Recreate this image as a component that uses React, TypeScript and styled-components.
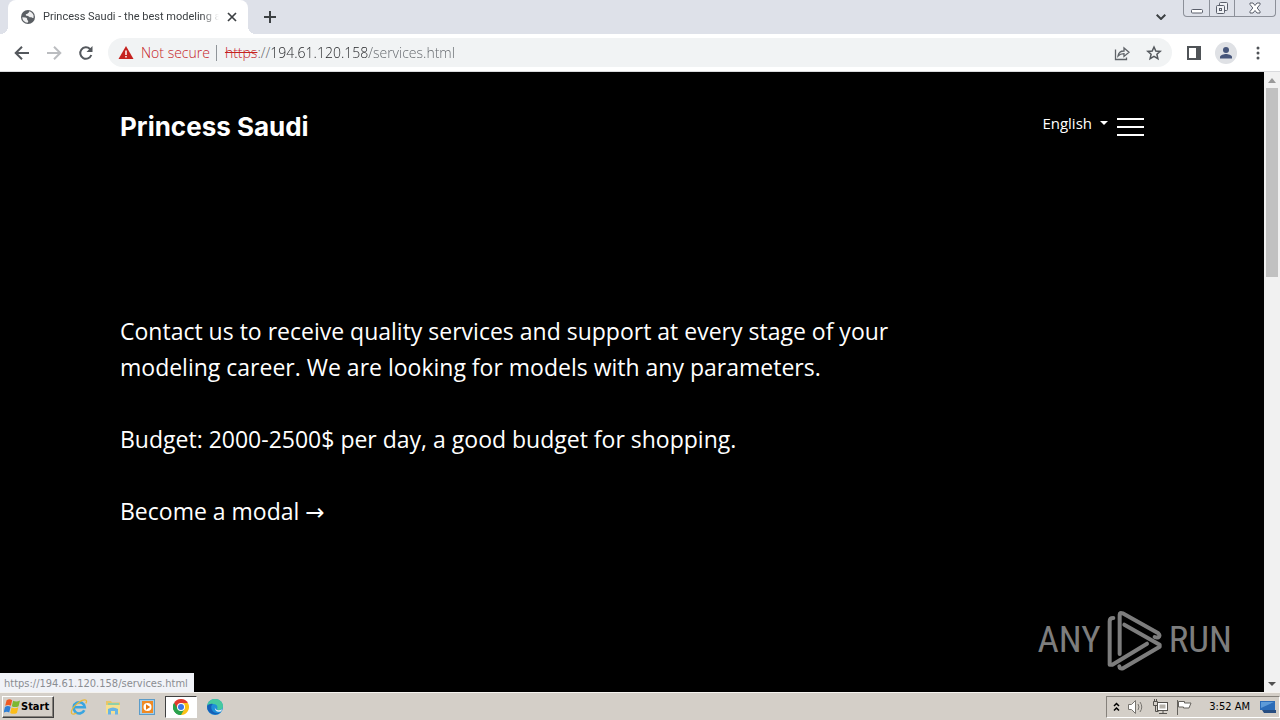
import React from "react";
import styled, { createGlobalStyle } from "styled-components";

const GlobalStyle = createGlobalStyle`
  *, *::before, *::after { box-sizing: border-box; }
  body { margin: 0; background: #d4cfc8; }
  button, input, select { font: inherit; color: inherit; }
  svg { display: block; flex: none; }
`;

const ui = `"Open Sans", "Noto Sans", sans-serif`;
const tahoma = `"DejaVu Sans Condensed", "DejaVu Sans", sans-serif`;

const Desktop = styled.div`
  display: flex;
  flex-direction: column;
  min-height: 100vh;
  font-family: ${ui};
`;

/* Browser window */

const TabStrip = styled.header`
  display: flex;
  height: 34px;
  padding-left: 8px;
  background: #dee1e9;
`;

const Tab = styled.div`
  position: relative;
  display: flex;
  align-items: center;
  width: 240px;
  padding: 0 10px 0 12px;
  gap: 7px;
  border-radius: 8px 8px 0 0;
  background: #fff;
  color: #3c4043;

  &::before, &::after {
    content: "";
    position: absolute;
    bottom: 0;
    width: 8px;
    height: 8px;
  }
  &::before {
    right: 100%;
    background: radial-gradient(circle at 0 0, transparent 8px, #fff 8px);
  }
  &::after {
    left: 100%;
    background: radial-gradient(circle at 100% 0, transparent 8px, #fff 8px);
  }
`;

const TabTitle = styled.span`
  flex: 1;
  min-width: 0;
  white-space: nowrap;
  font-family: Roboto, sans-serif;
  font-size: 11px;
  line-height: 16px;
  mask-image: linear-gradient(to right, #000 90%, transparent);
`;

const IconButton = styled.button<{ $w?: number; $h?: number }>`
  display: flex;
  align-items: center;
  justify-content: center;
  flex: none;
  width: ${(p) => p.$w ?? 28}px;
  height: ${(p) => p.$h ?? 28}px;
  padding: 0;
  border: 0;
  background: none;
`;

const NewTab = styled(IconButton)`
  align-self: center;
  margin-left: 8px;
`;

const StripEnd = styled.div`
  display: flex;
  align-items: center;
  margin-left: auto;
  padding-right: 4px;
  gap: 8px;
`;

const WindowControls = styled.div`
  display: flex;
  align-self: flex-start;
  border: 1px solid #8c9099;
  border-top: 0;
  border-radius: 0 0 4px 4px;

  button + button { border-left: 1px solid #8c9099; }
`;

const Toolbar = styled.div`
  display: flex;
  align-items: center;
  height: 38px;
  padding: 0 8px;
  border-bottom: 1px solid #d9dadd;
  background: #fff;
`;

const NavButtons = styled.div`
  display: flex;
  gap: 4px;
  margin-right: 8px;
`;

const Omnibox = styled.div`
  display: flex;
  align-items: center;
  flex: 1;
  height: 29px;
  padding: 0 2px 0 10px;
  border-radius: 15px;
  background: #f1f3f4;
  color: #5f6368;
  font-size: 14px;
  font-weight: 300;
  line-height: 20px;
`;

const Security = styled.button`
  display: flex;
  align-items: center;
  gap: 7px;
  padding: 0 6px 0 0;
  border: 0;
  border-right: 1px solid #8f9499;
  margin-right: 8px;
  background: none;
  color: #c5221f;
  line-height: 16px;
`;

const Scheme = styled.span`
  color: #c5221f;
  text-decoration: line-through;
`;

const Address = styled.input`
  flex: 1;
  min-width: 0;
  padding: 0;
  border: 0;
  outline: 0;
  background: linear-gradient(to right, #202124 99px, #5f6368 99px);
  background-clip: text;
  -webkit-background-clip: text;
  color: transparent;
`;

const ToolbarEnd = styled.div`
  display: flex;
  gap: 2px;
  margin-left: 8px;
`;

/* Page area */

const Viewport = styled.div`
  position: relative;
  display: flex;
  flex: 1;
  background: #000;
`;

const Page = styled.div`
  flex: 1;
  padding: 0 120px 60px;
  color: #fff;
`;

const SiteNav = styled.nav`
  display: flex;
  align-items: center;
  justify-content: space-between;
  height: 110px;
`;

const Brand = styled.a`
  color: #fff;
  font-family: Inter, sans-serif;
  font-size: 26px;
  font-weight: 700;
  line-height: 32px;
  text-decoration: none;
`;

const NavEnd = styled.div`
  display: flex;
  align-items: center;
  gap: 9px;
`;

const Language = styled.button`
  display: flex;
  align-items: center;
  gap: 8px;
  padding: 0 0 8px;
  border: 0;
  background: none;
  font-size: 15px;
  line-height: 24px;

  &::after {
    content: "";
    border: 4px solid transparent;
    border-top-color: #fff;
    border-bottom: 0;
  }
`;

const Burger = styled.button`
  display: flex;
  flex-direction: column;
  gap: 6px;
  width: 27px;
  padding: 0;
  border: 0;
  background: none;

  span { height: 2px; width: 100%; background: #fff; }
`;

const Intro = styled.main`
  max-width: 800px;
  padding-top: 131px;
  font-size: 23px;
  line-height: 36px;

  p { margin: 0 0 36px; }
  a { color: inherit; text-decoration: none; }
`;

const Arrow = styled.span`
  font-family: "DejaVu Sans", sans-serif;
  line-height: 1;
`;

const Scrollbar = styled.div`
  display: flex;
  flex-direction: column;
  align-items: center;
  width: 16px;
  background: #f1f1f1;
`;

const ScrollArrow = styled(IconButton)`
  width: 16px;
  height: 16px;
`;

const ScrollThumb = styled.div`
  width: 12px;
  height: 30.5%;
  margin-bottom: auto;
  background: #c1c1c1;
`;

const StatusBubble = styled.div`
  position: absolute;
  left: 0;
  bottom: 0;
  padding: 3px 6px 0 4px;
  background: #f1f3f8;
  color: #8a8d92;
  font-family: ${tahoma};
  font-size: 11px;
  line-height: 16px;
`;

const Watermark = styled.div`
  position: absolute;
  right: 48px;
  bottom: 16px;
  display: flex;
  align-items: center;
  gap: 4px;
  color: #7d7d7d;
  font-family: "Roboto Condensed", Roboto, sans-serif;
  font-size: 37px;
  line-height: 72px;
`;

/* Taskbar */

const Taskbar = styled.footer`
  display: flex;
  align-items: center;
  height: 28px;
  padding: 0 0 0 2px;
  border-top: 1px solid #f4f2ee;
  background: #d4cfc8;
`;

const Start = styled.button`
  display: flex;
  align-items: center;
  gap: 1px;
  height: 22px;
  padding: 0 4px 0 1px;
  border: 1px solid;
  border-color: #fff #404040 #404040 #fff;
  margin-right: 8px;
  background: #d4cfc8;
  box-shadow: inset -1px -1px #85817b;
  color: #000;
  font-family: ${tahoma};
  font-size: 11px;
  font-weight: 700;
`;

const TaskButton = styled.button<{ $active?: boolean }>`
  display: flex;
  align-items: center;
  justify-content: center;
  width: ${(p) => (p.$active ? 32 : 34)}px;
  height: 22px;
  padding: 0;
  border: 1px solid;
  border-color: ${(p) => (p.$active ? "#404040 #fff #fff #404040" : "transparent")};
  margin: 0 ${(p) => (p.$active ? 1 : 0)}px;
  background: ${(p) => (p.$active ? "#fff" : "none")};
`;

const Tray = styled.div`
  display: flex;
  align-items: center;
  height: 22px;
  padding: 0 3px;
  border: 1px solid;
  border-color: #85817b #fff #fff #85817b;
  margin-left: auto;
  gap: 4px;
  color: #000;
  font-family: ${tahoma};
  font-size: 11px;
`;

const Clock = styled.time`
  margin: 0 6px 0 11px;
  white-space: nowrap;
`;

const GlobeIcon = () => (
  <svg width="16" height="16" viewBox="0 0 16 16">
    <circle cx="8" cy="8" r="7" fill="#5a5e63" />
    <path d="M2.300 8.300 5.300 8.500C6.800 8.700 7.400 9.700 7.200 10.600 7 11.400 8 11.200 8.200 12.200 8.300 12.900 7.800 13.300 7.500 13.700 4.500 13.500 2.300 11.200 2.300 8.300z" fill="#fff" opacity=".9" />
    <path d="M9 2.300C11.200 2.700 13 4.300 13.600 6.500L13.500 9C12.500 9.200 12.300 8.200 11.300 8.200 10.300 8.300 9 8.400 8.700 7.500 8.500 6.500 7.200 7 6.300 6.700 5.500 6.300 5.600 5.200 6.500 5 7.700 4.900 7.300 4.200 8.300 3.900 9 3.700 9.300 3 9 2.300z" fill="#fff" opacity=".9" />
  </svg>
);

const WindowsIcon = () => (
  <svg width="16" height="16" viewBox="1 1.500 13.500 13.500">
    <path d="M3.200 2.500c1.700-1 3.200-.9 4.700 0L6.800 7.200c-1.500-.8-3-.9-4.800.1z" fill="#ee5a24" />
    <path d="M8.700 3c1.800.9 3.700.9 5.800-.2l-1.200 4.800c-1.900 1-3.900 1-5.700 0z" fill="#7cb832" />
    <path d="M1.800 8.200c1.700-1 3.200-.9 4.800-.1l-1.200 4.700c-1.500-.8-3-.8-4.700.2z" fill="#2f7fd6" />
    <path d="M7.400 8.600c1.800.9 3.700.9 5.700-.1l-1.200 4.800c-1.800 1-3.900 1-5.700 0z" fill="#fbbd1a" />
  </svg>
);

const IEIcon = () => (
  <svg width="18" height="18" viewBox="0 0 18 18" fill="none">
    <path d="M14.300 12.200A5.600 5.600 0 1 1 14.800 9.300H4.500" stroke="#39a5e0" strokeWidth="2.600" />
    <path d="M1.800 15.600C-.4 12 8.400 2.600 14.500 1.800c2.600-.2 2.300 2 1.300 3.600M1.800 15.600c1 1 3 .4 4.600-.6" stroke="#e9b93a" strokeWidth="1.300" />
  </svg>
);

const ExplorerIcon = () => (
  <svg width="18" height="18" viewBox="0 0 18 18">
    <path d="M2 3h5l1 1.500h8V13H2z" fill="#e8c667" />
    <path d="M4 5h11v3H4z" fill="#8fd0a8" />
    <path d="M2 7h14v8.500H2z" fill="#f6e08f" />
    <path d="M4 16.500V11q5-3 10 0v5.500h-3V13H7v3.500z" fill="#68b4e4" />
  </svg>
);

const MediaIcon = () => (
  <svg width="18" height="18" viewBox="0 0 18 18">
    <rect x="1.500" y="1.500" width="15" height="15" fill="#a5cde8" stroke="#5b9cc9" />
    <rect x="4" y="3" width="11" height="12" fill="#f08a24" />
    <circle cx="9.500" cy="9" r="4" fill="#fff" />
    <path d="m8 6.200 4.200 2.800L8 11.800z" fill="#e8760e" />
  </svg>
);

const ChromeIcon = () => (
  <svg width="16" height="16" viewBox="0 0 16 16">
    <path d="M8 8 1.070 4A8 8 0 0 1 14.930 4z" fill="#e33b2e" />
    <path d="M8 8 14.930 4A8 8 0 0 1 8 16z" fill="#fbc116" />
    <path d="M8 8v8A8 8 0 0 1 1.070 4z" fill="#2ba24c" />
    <path d="M8 4h6.930L11.400 10z" fill="#fbc116" />
    <path d="M1.070 4 4.540 10 8 8V4z" fill="#e33b2e" />
    <path d="M1.070 4 4.540 10 11.460 10 8 16A8 8 0 0 1 1.070 4z" fill="#2ba24c" />
    <circle cx="8" cy="8" r="4" fill="#fff" />
    <circle cx="8" cy="8" r="3" fill="#3b78e7" />
  </svg>
);

const EdgeIcon = () => (
  <svg width="18" height="18" viewBox="0 0 18 18">
    <circle cx="9" cy="9" r="8" fill="#1d8fd8" />
    <path d="M1.100 8C1.800 3.500 5.300 1 9 1c5 0 8 3.600 8 7 0 2.600-2 4-4 4-1.600 0-2.500-.7-1.700-1.700C12 8.500 10.800 6.200 7.800 6 5 5.800 2.400 6.700 1.100 8z" fill="#46c9a0" />
    <path d="M1.100 8C2 6.400 4.600 5.300 7 5.900 5 7 4.800 9.600 6 12c1.200 2.300 3.700 3.600 6.500 2.900l2.400-1A8 8 0 0 1 1.100 8z" fill="#1660b8" />
    <path d="M9.200 8.500c-.8 1.600.3 3.500 3 3.700 1.200.1 2.600-.2 4-1-.3 1-.8 1.800-1.400 2.400-3.600 1.100-7-1.500-5.600-5.100z" fill="#e3eef6" />
  </svg>
);

const PlayLogo = () => (
  <svg width="60" height="64" viewBox="22 12 180 192" fill="none" stroke="currentColor" strokeWidth="12" strokeLinecap="round" strokeLinejoin="round">
    <path d="M47 42Q36 42 36 52V182H44L148 119" />
    <path d="M66 150V32Q66 24 75 28L182 88Q189 95 182 100Q177 102 171 99" />
    <path d="M80 62 186 122V128L76 193Q66 196 65 187" />
  </svg>
);

export default function App() {
  return (
    <Desktop>
      <GlobalStyle />
      <TabStrip>
        <Tab>
          <GlobeIcon />
          <TabTitle>Princess Saudi - the best modeling ag</TabTitle>
          <IconButton $w={12} aria-label="Close tab">
            <svg width="10" height="10" viewBox="0 0 10 10" stroke="#3c4043" strokeWidth="1.700"><path d="m1 1 8 8M9 1 1 9" /></svg>
          </IconButton>
        </Tab>
        <NewTab aria-label="New tab">
          <svg width="12" height="12" viewBox="0 0 12 12" stroke="#3c4043" strokeWidth="2"><path d="M6 0v12M0 6h12" /></svg>
        </NewTab>
        <StripEnd>
          <IconButton aria-label="Search tabs">
            <svg width="10" height="6" viewBox="0 0 10 6" fill="none" stroke="#3c4043" strokeWidth="2"><path d="m.7.7 4.300 4.300L9.300.7" /></svg>
          </IconButton>
          <WindowControls>
            <IconButton $w={25} $h={16} aria-label="Minimize">
              <svg width="12" height="14" viewBox="0 0 12 14" fill="#fff" stroke="#5a5f6b"><rect x=".5" y="8.500" width="11" height="3.500" rx="1" /></svg>
            </IconButton>
            <IconButton $w={25} $h={16} aria-label="Restore">
              <svg width="14" height="14" viewBox="0 0 14 14" fill="#eef0f4" stroke="#5a5f6b"><rect x="4.500" y="1.500" width="8" height="8" rx="1" /><rect x="1.500" y="4.500" width="8" height="8" rx="1" /><rect x="4.500" y="7.500" width="2" height="2" /></svg>
            </IconButton>
            <IconButton $w={41} $h={16} aria-label="Close">
              <svg width="12" height="12" viewBox="0 0 12 12" fill="#fff" stroke="#5a5f6b"><path d="M1 1h3l2 2.500L8 1h3v1.500L8.200 6 11 9.500V11H8L6 8.500 4 11H1V9.500L3.800 6 1 2.500z" /></svg>
            </IconButton>
          </WindowControls>
        </StripEnd>
      </TabStrip>

      <Toolbar>
        <NavButtons>
          <IconButton aria-label="Back">
            <svg width="16" height="16" viewBox="0 0 16 16" fill="none" stroke="#54585d" strokeWidth="2"><path d="M15 8H2.500M8 1.700 1.700 8 8 14.300" /></svg>
          </IconButton>
          <IconButton aria-label="Forward">
            <svg width="16" height="16" viewBox="0 0 16 16" fill="none" stroke="#bbbdc0" strokeWidth="2"><path d="M1 8h12.500M8 1.700 14.300 8 8 14.300" /></svg>
          </IconButton>
          <IconButton aria-label="Reload">
            <svg width="16" height="16" viewBox="0 0 16 16" fill="none" stroke="#54585d" strokeWidth="2"><path d="M13.300 10A5.700 5.700 0 1 1 12 4l1.500 1.500" /><path d="M14.500 1v6h-6z" fill="#54585d" stroke="none" /></svg>
          </IconButton>
        </NavButtons>
        <Omnibox>
          <Security>
            <svg width="16" height="16" viewBox="0 0 16 16"><path d="M8 1 15.500 14H.5z" fill="#c5221f" /><path d="M8 5.500V10M8 11v1.500" stroke="#fff" strokeWidth="1.500" /></svg>
            Not secure
          </Security>
          <Scheme>https</Scheme>://
          <Address aria-label="Address" defaultValue="194.61.120.158/services.html" spellCheck={false} />
          <IconButton $w={32} aria-label="Share">
            <svg width="16" height="16" viewBox="0 0 16 16" fill="none" stroke="#5f6368" strokeWidth="1.300"><path d="M1.500 4.500v10h11v-2M4 11c.5-3.500 2.500-5 6-5V3l5 4.200-5 4.200V8.700C7.500 8.700 5.500 9.300 4 11z" /></svg>
          </IconButton>
          <IconButton $w={32} aria-label="Bookmark">
            <svg width="16" height="16" viewBox="0 0 16 16" fill="none" stroke="#54585d" strokeWidth="1.500"><path d="m8 2 1.800 4 4.400.4-3.300 2.900 1 4.300L8 11.300l-3.900 2.300 1-4.300-3.300-2.900L6.200 6z" /></svg>
          </IconButton>
        </Omnibox>
        <ToolbarEnd>
          <IconButton aria-label="Side panel">
            <svg width="14" height="14" viewBox="0 0 14 14"><path d="M1 1h12v12H1z" fill="none" stroke="#4f5357" strokeWidth="2" /><path d="M9 1h4v12H9z" fill="#4f5357" /></svg>
          </IconButton>
          <IconButton $w={32} aria-label="Profile">
            <svg width="22" height="22" viewBox="0 0 22 22" fill="#46557a"><circle cx="11" cy="11" r="11" fill="#dfe1e5" /><circle cx="11" cy="8" r="3" /><path d="M5 16.500v-1.500c0-2 4-3 6-3s6 1 6 3v1.500z" /></svg>
          </IconButton>
          <IconButton aria-label="Menu">
            <svg width="4" height="14" viewBox="0 0 4 14" fill="#4f5357"><circle cx="2" cy="2" r="1.500" /><circle cx="2" cy="7" r="1.500" /><circle cx="2" cy="12" r="1.500" /></svg>
          </IconButton>
        </ToolbarEnd>
      </Toolbar>

      <Viewport>
        <Page>
          <SiteNav>
            <Brand href="#home">Princess Saudi</Brand>
            <NavEnd>
              <Language>English</Language>
              <Burger aria-label="Open menu"><span /><span /><span /></Burger>
            </NavEnd>
          </SiteNav>
          <Intro>
            <p>Contact us to receive quality services and support at every stage of your modeling career. We are looking for models with any parameters.</p>
            <p>Budget: 2000-2500$ per day, a good budget for shopping.</p>
            <a href="#contact">Become a modal <Arrow>→</Arrow></a>
          </Intro>
        </Page>
        <Scrollbar>
          <ScrollArrow aria-label="Scroll up">
            <svg width="8" height="5" viewBox="0 0 8 5" fill="#9a9a9a"><path d="M0 5 4 0l4 5z" /></svg>
          </ScrollArrow>
          <ScrollThumb />
          <ScrollArrow aria-label="Scroll down">
            <svg width="8" height="4" viewBox="0 0 8 4" fill="#505050"><path d="m0 0 4 4 4-4z" /></svg>
          </ScrollArrow>
        </Scrollbar>
        <StatusBubble>https://194.61.120.158/services.html</StatusBubble>
        <Watermark>
          <span>ANY</span>
          <PlayLogo />
          <span>RUN</span>
        </Watermark>
      </Viewport>

      <Taskbar>
        <Start><WindowsIcon />Start</Start>
        <TaskButton aria-label="Internet Explorer"><IEIcon /></TaskButton>
        <TaskButton aria-label="Explorer"><ExplorerIcon /></TaskButton>
        <TaskButton aria-label="Media Player"><MediaIcon /></TaskButton>
        <TaskButton $active aria-label="Chrome"><ChromeIcon /></TaskButton>
        <TaskButton aria-label="Edge"><EdgeIcon /></TaskButton>
        <Tray>
          <IconButton $w={12} $h={20} aria-label="Show hidden icons">
            <svg width="7" height="10" viewBox="0 0 7 10" fill="none" stroke="#000" strokeWidth="1.500"><path d="m1 4 2.500-2.500L6 4M1 8.500 3.500 6 6 8.500" /></svg>
          </IconButton>
          <IconButton $w={20} $h={20} aria-label="Volume">
            <svg width="18" height="16" viewBox="0 0 18 16" fill="#fff" stroke="#77746f"><path d="M1.500 5.500h3l4-4v13l-4-4h-3z" /><path d="M11 5q2 3 0 6M13 3q3.500 5 0 10" fill="none" /></svg>
          </IconButton>
          <IconButton $w={20} $h={20} aria-label="Network">
            <svg width="17" height="16" viewBox="0 0 17 16" fill="#fff" stroke="#55524e"><rect x="5.500" y="3.500" width="10" height="8" /><rect x="7.500" y="5.500" width="6" height="4" fill="#b5b1aa" stroke="none" /><path d="M7 14.500h8M11 11.500v3M1.500 2.500h4v4h-4zM2.500 0v2M4.500 0v2M3.500 6.500v6h3" fill="none" /></svg>
          </IconButton>
          <IconButton $w={20} $h={20} aria-label="Action center">
            <svg width="17" height="16" viewBox="0 0 17 16" fill="#fff" stroke="#65625d"><path d="M1.500 1v15M2.500 2.500h6v1.500h6.500l-2 5H7.500V8h-5z" /></svg>
          </IconButton>
          <Clock>3:52 AM</Clock>
          <svg width="16" height="14" viewBox="0 0 16 14"><path d="M0 1h15v9H0z" fill="#2b6cb8" /><path d="M1 2h13L1 8z" fill="#5d9bd8" /><path d="M2 10h14v3H4z" fill="#274d80" /></svg>
        </Tray>
      </Taskbar>
    </Desktop>
  );
}
